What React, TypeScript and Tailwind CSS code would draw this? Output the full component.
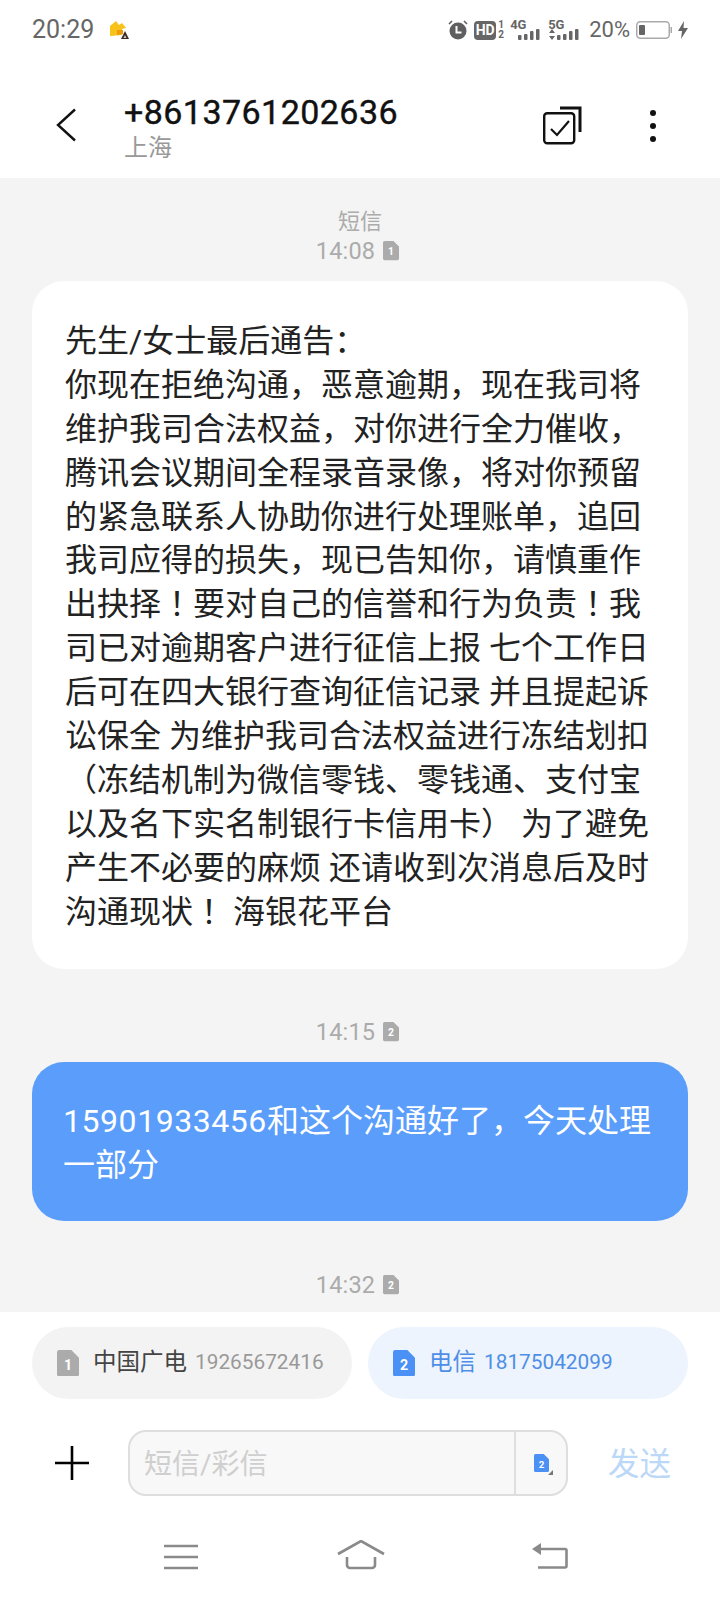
const FONT = "font-['Roboto','Noto_Sans_CJK_SC',sans-serif]";

const incoming = [
  "先生/女士最后通告：",
  "你现在拒绝沟通，恶意逾期，现在我司将",
  "维护我司合法权益，对你进行全力催收，",
  "腾讯会议期间全程录音录像，将对你预留",
  "的紧急联系人协助你进行处理账单，追回",
  "我司应得的损失，现已告知你，请慎重作",
  "出抉择！要对自己的信誉和行为负责！我",
  "司已对逾期客户进行征信上报 七个工作日",
  "后可在四大银行查询征信记录 并且提起诉",
  "讼保全 为维护我司合法权益进行冻结划扣",
  "（冻结机制为微信零钱、零钱通、支付宝",
  "以及名下实名制银行卡信用卡） 为了避免",
  "产生不必要的麻烦 还请收到次消息后及时",
  "沟通现状！ 海银花平台",
];

function Line({ text }: { text: string }) {
  const paren = text.startsWith("（");
  const body = paren ? text.slice(1) : text;
  const parts = body.split("！");
  return (
    <div className="h-[43.9px] whitespace-pre">
      {paren && (
        <span className="inline-block w-[32px] text-center leading-[0] font-['Noto_Sans_CJK_TC',sans-serif]">（</span>
      )}
      {parts.map((p, i) => (
        <span key={i}>
          {p}
          {i < parts.length - 1 && <span className="leading-[0] font-['Noto_Sans_CJK_TC',sans-serif]">！</span>}
        </span>
      ))}
    </div>
  );
}

function Sim({ n, width, fill }: { n: string; width: number; fill: string }) {
  return (
    <svg width={width} height={width * 1.2} viewBox="0 0 20 24" className="shrink-0">
      <path d="M2 0h11l7 7v15a2 2 0 0 1-2 2H2a2 2 0 0 1-2-2V2a2 2 0 0 1 2-2z" fill={fill} />
      <text x="10" y="18" textAnchor="middle" fontSize="13" fontWeight="700" fill="#fff" fontFamily="Roboto, sans-serif">{n}</text>
    </svg>
  );
}

function Stamp({ time, n, className }: { time: string; n: string; className?: string }) {
  return (
    <div className={`flex items-center justify-center gap-[8px] h-[30px] pr-[5px] text-[23.5px] text-[#ababab] tracking-[0.2px] ${className ?? ""}`}>
      <span className="pt-[2px]">{time}</span>
      <Sim n={n} width={16} fill="#ababab" />
    </div>
  );
}

function Bars() {
  return (
    <svg width="24" height="12" viewBox="0 0 24 12">
      <rect x="0" y="7" width="3.5" height="5" rx="1" fill="#666" />
      <rect x="6" y="6" width="3.5" height="6" rx="1" fill="#666" />
      <rect x="12" y="3" width="3.5" height="9" rx="1" fill="#666" />
      <rect x="18" y="1" width="3.5" height="11" rx="1" fill="#666" />
    </svg>
  );
}

function StatusBar() {
  return (
    <div className="h-[60px] flex items-start justify-between pt-[16px] pl-[32px] pr-[32px]">
      <div className="flex items-center gap-[14px] h-[28px]">
        <span className="text-[25px] leading-[28px] text-[#666]">20:29</span>
        <svg width="22" height="20" viewBox="0 0 22 20" className="mt-[-1px]">
          <path d="M2 6L8 1l3 4 3-2 4 5-4 1v6l-12 1z" fill="#f7c21a" />
          <path d="M9 10h6v4l-6 1z" fill="#ee9a00" />
          <path d="M17 11l4 8h-8z" fill="#3a2a20" />
          <path d="M17 15l1.5 3h-3z" fill="#d9c8b8" />
        </svg>
      </div>
      <div className="flex items-center h-[28px]">
        <svg width="20" height="20" viewBox="0 0 20 20" className="mr-[6px]">
          <circle cx="10" cy="11" r="8.5" fill="#5f5f5f" />
          <path d="M8.5 6v6.5h5" stroke="#fff" strokeWidth="2" fill="none" />
          <path d="M1 4l3-3M19 4l-3-3" stroke="#5f5f5f" strokeWidth="1.6" />
        </svg>
        <div className="w-[22px] h-[19px] rounded-[4px] bg-[#666] text-white text-[14px] leading-[19px] font-bold text-center">HD</div>
        <div className="w-[8px] ml-[1px] text-[10px] leading-[10px] font-bold text-[#666] flex flex-col items-center">
          <span>1</span>
          <span>2</span>
        </div>
        <div className="relative w-[32px] h-[20px] ml-[5px]">
          <span className="absolute left-0 top-[-2px] text-[13px] leading-[13px] font-bold text-[#666]">4G</span>
          <div className="absolute left-[8px] bottom-0"><Bars /></div>
        </div>
        <div className="relative w-[34px] h-[20px] ml-[6px]">
          <span className="absolute left-0 top-[-2px] text-[13px] leading-[13px] font-bold text-[#666]">5G</span>
          <div className="absolute left-[9px] bottom-0"><Bars /></div>
          <svg width="6" height="11" viewBox="0 0 6 11" className="absolute left-[1px] bottom-0">
            <path d="M3 0l3 4H0zM3 11l3-4H0z" fill="#666" />
          </svg>
        </div>
        <span className="ml-[7px] text-[22px] leading-[28px] text-[#666]">20%</span>
        <svg width="36" height="18" viewBox="0 0 36 18" className="ml-[6px]">
          <rect x="0.75" y="0.75" width="32.5" height="16.5" rx="3.5" fill="none" stroke="#aaa" strokeWidth="1.5" />
          <rect x="3" y="4" width="6" height="10" rx="1" fill="#666" />
          <rect x="34.5" y="6" width="1.5" height="6" fill="#aaa" />
        </svg>
        <svg width="10" height="18" viewBox="0 0 10 18" className="ml-[6px]">
          <path d="M6 0L0 10h4l-1 8 7-11H5.5z" fill="#666" />
        </svg>
      </div>
    </div>
  );
}

function Header() {
  return (
    <div className="h-[118px] flex items-start">
      <div className="w-[124px] shrink-0 pt-[48px] pl-[56px]">
        <svg width="20" height="34" viewBox="0 0 20 34">
          <path d="M19 1.5L2 17l17 15.5" stroke="#111" strokeWidth="2.4" fill="none" />
        </svg>
      </div>
      <div className="flex-1 pt-[32px]">
        <div className="text-[34px] leading-[40px] font-normal tracking-[0.45px] text-[#111] [-webkit-text-stroke:0.4px_#111]">+8613761202636</div>
        <div className="text-[24px] leading-[32px] text-[#999]">上海</div>
      </div>
      <div className="w-[180px] shrink-0 relative h-full">
        <svg width="40" height="40" viewBox="0 0 40 40" className="absolute left-[3px] top-[46px]">
          <rect x="1.2" y="7.2" width="30" height="30" rx="3" fill="none" stroke="#111" strokeWidth="2.4" />
          <path d="M8 23l6 6 12-14" fill="none" stroke="#111" strokeWidth="2.2" />
          <path d="M17 2h20v24" fill="none" stroke="#111" strokeWidth="3" />
        </svg>
        <div className="absolute left-[110px] top-[50px] flex flex-col gap-[7px]">
          <div className="w-[6px] h-[6px] rounded-full bg-[#111]" />
          <div className="w-[6px] h-[6px] rounded-full bg-[#111]" />
          <div className="w-[6px] h-[6px] rounded-full bg-[#111]" />
        </div>
      </div>
    </div>
  );
}

function Messages() {
  return (
    <div className="flex-1 bg-[#f4f4f4] overflow-hidden px-[32px] pt-[31px]">
      <div className="text-center text-[22px] leading-[26px] text-[#ababab]">短信</div>
      <Stamp time="14:08" n="1" className="mt-[1px]" />
      <div className="mt-[15px] h-[688px] bg-white rounded-[32px] px-[33px] pt-[39px] text-[32px] leading-[43.9px] text-[#222]">
        {incoming.map((l, i) => (
          <Line key={i} text={l} />
        ))}
      </div>
      <Stamp time="14:15" n="2" className="mt-[48px]" />
      <div className="mt-[15px] h-[159px] bg-[#5a9dfb] rounded-[32px] px-[31px] pt-[37px] text-[32px] leading-[44px] text-white">
        <div className="whitespace-pre"><span className="tracking-[0.55px]">15901933456</span>和这个沟通好了，今天处理</div>
        <div className="whitespace-pre">一部分</div>
      </div>
      <Stamp time="14:32" n="2" className="mt-[49px]" />
    </div>
  );
}

function Composer() {
  return (
    <div className="h-[288px] bg-white">
      <div className="flex gap-[16px] px-[32px] pt-[15px]">
        <div className="w-[320px] h-[72px] rounded-[36px] bg-[#f3f3f3] flex items-center pl-[25px]">
          <Sim n="1" width={22} fill="#ababab" />
          <span className="ml-[14px] text-[23.5px] text-[#444]">中国广电</span>
          <span className="ml-[8px] text-[20.8px] text-[#999]">19265672416</span>
        </div>
        <div className="w-[320px] h-[72px] rounded-[36px] bg-[#edf4fd] flex items-center pl-[25px]">
          <Sim n="2" width={22} fill="#4a90f5" />
          <span className="ml-[14px] text-[23.5px] text-[#4f8ee6]">电信</span>
          <span className="ml-[8px] text-[20.8px] text-[#4f8ee6]">18175042099</span>
        </div>
      </div>
      <div className="flex items-center mt-[31px] h-[66px]">
        <div className="w-[128px] shrink-0 pl-[55px]">
          <svg width="34" height="34" viewBox="0 0 34 34">
            <path d="M17 0v34M0 17h34" stroke="#000" strokeWidth="2.6" />
          </svg>
        </div>
        <div className="w-[440px] h-[66px] rounded-[18px] border-2 border-[#dedede] bg-[#f8f8f8] flex">
          <div className="flex-1 pl-[14px] pt-[3px] flex items-center text-[28px] text-[#cfcfcf]">短信/彩信</div>
          <div className="w-[52px] border-l-2 border-[#dedede] flex items-center justify-center relative">
            <Sim n="2" width={15} fill="#4a90f5" />
            <div className="absolute right-[13px] bottom-[19px] w-0 h-0 border-l-[5px] border-l-transparent border-b-[5px] border-b-[#777]" />
          </div>
        </div>
        <div className="ml-[40px] pt-[3px] text-[31.5px] text-[#bcd8f8]">发送</div>
      </div>
      <div className="flex items-start mt-[47px] pl-[164px]">
        <svg width="34" height="26" viewBox="0 0 34 26" className="mt-[1px]">
          <path d="M0 2h34M0 13h34M0 24h34" stroke="#8a8a8a" strokeWidth="2.6" />
        </svg>
        <svg width="48" height="30" viewBox="0 0 48 30" className="ml-[139px] mt-[-3px]">
          <path d="M1 14L24 1l23 13" stroke="#8a8a8a" strokeWidth="2.6" fill="none" />
          <path d="M10 17v8a3 3 0 0 0 3 3h22a3 3 0 0 0 3-3v-8" stroke="#8a8a8a" strokeWidth="2.6" fill="none" />
        </svg>
        <svg width="36" height="28" viewBox="0 0 36 28" className="ml-[147px] mt-[-1px]">
          <path d="M0 7l9-6v12z" fill="#8a8a8a" />
          <path d="M7 7h26a1.5 1.5 0 0 1 1.5 1.5V24a1.5 1.5 0 0 1-1.5 1.5H6" stroke="#8a8a8a" strokeWidth="2.6" fill="none" />
        </svg>
      </div>
    </div>
  );
}

export default function App() {
  return (
    <div className={`w-[720px] h-[1600px] bg-white flex flex-col overflow-hidden ${FONT}`}>
      <StatusBar />
      <Header />
      <Messages />
      <Composer />
    </div>
  );
}
